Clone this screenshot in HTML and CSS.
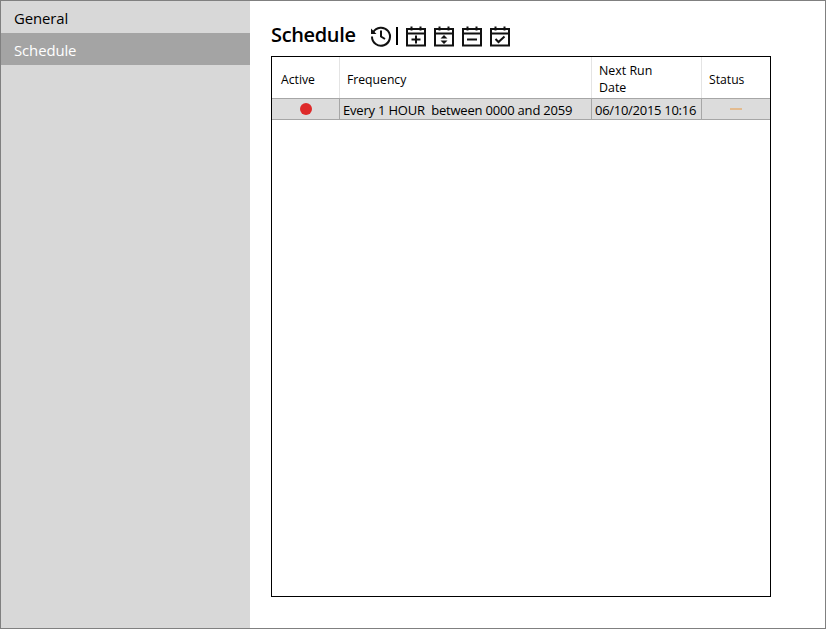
FILE: index.html
```html
<!DOCTYPE html>
<html lang="en">
<head>
<meta charset="utf-8">
<title>Schedule</title>
<link rel="stylesheet" href="styles.css">
</head>
<body>
<div class="app">
  <nav class="sidebar">
    <div class="nav-item">General</div>
    <div class="nav-item active">Schedule</div>
  </nav>
  <main class="content">
    <header class="title-row">
      <h1 class="title">Schedule</h1>
      <div class="toolbar">
        <svg class="icon history" width="24" height="24" viewBox="0 0 24 24"><path d="M4.200 8.200A9 9 0 1 1 3 12.500" fill="none" stroke="#111" stroke-width="2"/><path d="M2 4.500v5.500h5.500z" fill="#111"/><path d="M12 6.500V12.500l4 2.500" fill="none" stroke="#111" stroke-width="2"/></svg>
        <span class="sep"></span>
        <svg class="icon" width="20" height="22" viewBox="0 0 20 22"><path d="M1 4h18v16.500H1zM1 8.500h18M5.500 1.500v4M14.500 1.500v4" fill="none" stroke="#111" stroke-width="2"/><path d="M5.500 14.500h9M10 10.500v8" fill="none" stroke="#111" stroke-width="2"/></svg>
        <svg class="icon" width="20" height="22" viewBox="0 0 20 22"><path d="M1 4h18v16.500H1zM1 8.500h18M5.500 1.500v4M14.500 1.500v4" fill="none" stroke="#111" stroke-width="2"/><path d="M10 10l3.500 3.500h-7zM10 19l3.500-3.500h-7z" fill="#111"/></svg>
        <svg class="icon" width="20" height="22" viewBox="0 0 20 22"><path d="M1 4h18v16.500H1zM1 8.500h18M5.500 1.500v4M14.500 1.500v4" fill="none" stroke="#111" stroke-width="2"/><path d="M5 14.500h10" fill="none" stroke="#111" stroke-width="2"/></svg>
        <svg class="icon" width="20" height="22" viewBox="0 0 20 22"><path d="M1 4h18v16.500H1zM1 8.500h18M5.500 1.500v4M14.500 1.500v4" fill="none" stroke="#111" stroke-width="2"/><path d="M5.500 14l3 3 6-5.500" fill="none" stroke="#111" stroke-width="2"/></svg>
      </div>
    </header>
    <section class="grid">
      <div class="row head">
        <div class="cell col-active">Active</div>
        <div class="cell col-freq">Frequency</div>
        <div class="cell col-next">Next Run<br>Date</div>
        <div class="cell col-status">Status</div>
      </div>
      <div class="row data">
        <div class="cell col-active"><span class="dot"></span></div>
        <div class="cell col-freq">Every 1 HOUR&nbsp; between 0000 and 2059</div>
        <div class="cell col-next">06/10/2015 10:16</div>
        <div class="cell col-status"><span class="dash"></span></div>
      </div>
    </section>
  </main>
</div>
</body>
</html>
```
FILE: styles.css
```css
* { box-sizing: border-box; }
html, body { margin: 0; height: 100%; }
body { font-family: "Open Sans", "Noto Sans", "Liberation Sans", sans-serif; color: #000; background: #fff; }
.app { display: flex; width: 826px; height: 629px; border: 1px solid #808080; }
.sidebar { width: 249px; background: #d8d8d8; flex: none; }
.nav-item { height: 32px; padding-left: 13px; font-size: 14.9px; line-height: 35px; letter-spacing: -0.1px; }
.nav-item.active { background: #a4a4a4; color: #fff; }
.content { flex: 1; padding: 19px 0 0 21px; }
.title-row { display: flex; align-items: center; height: 30px; margin-bottom: 6px; }
.title { margin: 0 13px 0 0; font-size: 20px; font-weight: 600; line-height: 30px; letter-spacing: -0.35px; }
.toolbar { display: flex; align-items: center; gap: 8px; padding-top: 1px; }
.history { margin-right: -5px; }
.sep { width: 2px; height: 18px; background: #000; margin-top: 1px; }
.grid { width: 500px; height: 541px; border: 1px solid #000; }
.row { display: flex; }
.row.head { height: 41px; font-size: 12.2px; }
.row.data { height: 22px; font-size: 13px; background: #dcdcdc; border-top: 1px solid #a6a6a6; border-bottom: 1px solid #a6a6a6; }
.cell { display: flex; align-items: center; flex: none; }
.head .cell { line-height: 17px; border-right: 1px solid #e4e4e4; padding: 4px 0 0 7px; }
.head .col-active { padding-left: 9px; }
.head .col-next { padding-top: 2px; font-size: 12.4px; }
.data .cell { border-right: 1px solid #a6a6a6; padding: 1px 0 0 3px; white-space: nowrap; letter-spacing: -0.2px; }
.data .col-next { letter-spacing: -0.28px; }
.col-active { width: 68px; }
.col-freq { width: 252px; }
.col-next { width: 110px; }
.col-status { width: 68px; }
.head .col-status, .data .col-status { border-right: 0; }
.data .col-active, .data .col-status { justify-content: center; padding: 0; }
.dot { width: 12px; height: 12px; border-radius: 50%; background: #de2a2a; margin-top: -1px; }
.dash { width: 12px; height: 2px; background: #e3bb8f; margin-top: -1px; }
```
